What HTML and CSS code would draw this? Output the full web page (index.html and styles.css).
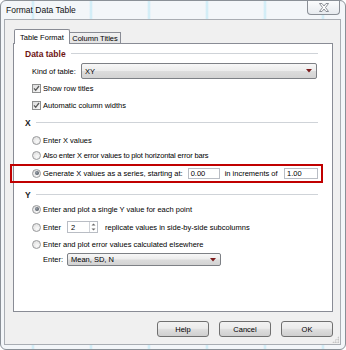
FILE: index.html
```html
<!DOCTYPE html>
<html>
<head>
<meta charset="utf-8">
<link rel="stylesheet" href="styles.css">
</head>
<body>
<div class="window">
  <div class="titlebar">
    <span class="title">Format Data Table</span>
    <div class="close">
      <svg width="10" height="9" viewBox="0 0 10 9"><polygon points="0.5,0.5 3,0.5 5,3 7,0.5 9.5,0.5 6.5,4.5 9.5,8.5 7,8.5 5,6 3,8.5 0.5,8.5 3.5,4.5" fill="#fdfdfd" stroke="#80858c" stroke-width="0.9" stroke-linejoin="round"/></svg>
    </div>
  </div>
  <div class="client">
    <div class="tabs">
      <div class="tab active">Table Format</div>
      <div class="tab">Column Titles</div>
    </div>
    <div class="panel">
      <div class="section s-data"><span class="sec-title maroon">Data table</span><span class="rule"></span></div>
      <div class="row kind">
        <span class="kind-label">Kind of table:</span>
        <div class="select kind-select"><span>XY</span><svg class="arrow" width="6" height="4" viewBox="0 0 6 4"><polygon points="0,0 6,0 3,3.5" fill="#7c1d1d"/></svg></div>
      </div>
      <div class="row opt c1"><span class="cb"><svg width="9" height="9" viewBox="0 0 9 9"><path d="M2 4.4 L3.7 6.3 L7 2" fill="none" stroke="#5a5a5a" stroke-width="1.3"/></svg></span>Show row titles</div>
      <div class="row opt c2"><span class="cb"><svg width="9" height="9" viewBox="0 0 9 9"><path d="M2 4.4 L3.7 6.3 L7 2" fill="none" stroke="#5a5a5a" stroke-width="1.3"/></svg></span>Automatic column widths</div>

      <div class="section s-x"><span class="sec-title">X</span><span class="rule"></span></div>
      <div class="row opt r1"><span class="radio"></span>Enter X values</div>
      <div class="row opt r2 tight"><span class="radio"></span>Also enter X error values to plot horizontal error bars</div>
      <div class="row opt r3"><span class="radio on"></span>Generate X values as a series, starting at:<span class="input start">0.00</span><span class="incr">in increments of</span><span class="input step">1.00</span></div>

      <div class="section s-y"><span class="sec-title">Y</span><span class="rule"></span></div>
      <div class="row opt r4"><span class="radio on"></span>Enter and plot a single Y value for each point</div>
      <div class="row opt r5"><span class="radio"></span><span class="lbl">Enter</span><span class="input spin"><span>2</span><span class="spin-btn"><svg width="7" height="10" viewBox="0 0 7 10"><polygon points="1.5,3.5 5.5,3.5 3.5,1.5" fill="#6a6a6a"/><polygon points="1.5,6.5 5.5,6.5 3.5,8.5" fill="#6a6a6a"/></svg></span></span><span class="repl">replicate values in side-by-side subcolumns</span></div>
      <div class="row opt r6"><span class="radio"></span>Enter and plot error values calculated elsewhere</div>
      <div class="row enter"><span class="lbl">Enter:</span><div class="select enter-select"><span>Mean, SD, N</span><svg class="arrow" width="6" height="4" viewBox="0 0 6 4"><polygon points="0,0 6,0 3,3.5" fill="#7c1d1d"/></svg></div></div>
    </div>
    <div class="buttons">
      <div class="btn">Help</div>
      <div class="btn">Cancel</div>
      <div class="btn">OK</div>
    </div>
    <span class="grip"></span>
  </div>
  <div class="highlight"></div>
</div>
</body>
</html>
```

FILE: styles.css
```css
* { box-sizing: border-box; margin: 0; padding: 0; }
html, body { width: 346px; height: 350px; overflow: hidden; background: #fff; }
body { font-family: "Liberation Sans", Arial, sans-serif; font-size: 7.5px; color: #000; }

.window {
  position: relative;
  width: 346px;
  height: 350px;
  border: 1px solid #8a9097;
  border-radius: 6px;
  overflow: hidden;
  display: flex;
  flex-direction: column;
  background-color: #f3f6f9;
  background-image: linear-gradient(90deg, transparent 0, transparent 28px, rgba(165, 225, 245, 0.55) 30px, transparent 32px);
  background-size: 58px 100%;
  background-position: 2px 0;
}

.titlebar { height: 18px; display: flex; align-items: flex-start; flex: none; }
.title { padding-left: 5px; line-height: 18px; font-size: 8.5px; color: #111; }
.close {
  margin-left: auto;
  margin-right: 5px;
  width: 33px;
  height: 14px;
  border: 1px solid #8a8f96;
  border-top: none;
  border-radius: 0 0 4px 4px;
  background: linear-gradient(#fbfcfd, #e7ebef);
  display: flex;
  align-items: center;
  justify-content: center;
}

.client {
  position: relative;
  flex: 1;
  margin: 0 4px 4px 3px;
  border: 1px solid #a9adb3;
  background: #f0f0f0;
  padding: 9px 7px 7px 8px;
  display: flex;
  flex-direction: column;
}

.tabs { height: 14px; display: flex; align-items: flex-end; position: relative; z-index: 1; flex: none; }
.tab {
  display: flex;
  align-items: center;
  justify-content: center;
  border: 1px solid #898c95;
  border-bottom: none;
}
.tab.active {
  margin-left: 1px;
  width: 56px;
  height: 15px;
  margin-bottom: -1px;
  background: #fff;
  border-radius: 2px 2px 0 0;
}
.tab:not(.active) {
  width: 51px;
  height: 11px;
  border-left: none;
  background: linear-gradient(#f2f2f2, #e3e3e3);
}

.panel {
  flex: none;
  height: 269px;
  border: 1px solid #898c95;
  background: #fff;
  padding: 4px 14px 0 11px;
  display: flex;
  flex-direction: column;
}

.section { height: 12px; display: flex; align-items: center; gap: 5px; flex: none; }
.sec-title { font-weight: bold; font-size: 8.5px; color: #1a1a1a; }
.sec-title.maroon { color: #6e1414; }
.rule { flex: 1; height: 1px; background: #cfd3d8; margin-top: -1px; }

.row { display: flex; align-items: center; flex: none; white-space: nowrap; }
.opt { height: 14px; padding-left: 7px; }
.tight { letter-spacing: -0.16px; }

.kind { height: 16px; margin-top: 3px; padding-left: 7px; }
.kind-label { width: 49px; }
.select {
  height: 100%;
  border: 1px solid #7d8085;
  border-radius: 2px;
  background: linear-gradient(#f7f7f7, #ececec 48%, #dcdcdc 52%, #d3d3d3);
  display: flex;
  align-items: center;
  padding: 0 4px 0 3px;
}
.select .arrow { margin-left: auto; }
.kind-select { flex: 1; margin-right: 1px; }

.c1 { margin-top: 2px; }
.c2 { margin-top: 3px; }
.s-x { margin-top: 5px; }
.r1 { margin-top: 4px; }
.r2 { margin-top: 1px; }
.r3 { margin-top: 4px; }
.s-y { margin-top: 9px; }
.r4 { margin-top: 1px; }
.r5 { margin-top: 4px; }
.r6 { margin-top: 3px; }
.enter { height: 13px; margin-top: 2px; padding-left: 18px; }

.cb {
  width: 9px;
  height: 9px;
  margin-right: 2px;
  border: 1px solid #8e8f8f;
  background: linear-gradient(135deg, #dcdcdc, #f7f7f7);
  display: flex;
  align-items: center;
  justify-content: center;
  flex: none;
}
.cb svg { margin: -1px; }

.radio {
  position: relative;
  width: 9px;
  height: 9px;
  margin-right: 2px;
  border-radius: 50%;
  border: 1px solid #999a9c;
  background: radial-gradient(circle at 60% 65%, #fafafa, #d9d9d9);
  flex: none;
}
.radio.on::after {
  content: "";
  position: absolute;
  left: 1.5px;
  top: 1.5px;
  width: 4px;
  height: 4px;
  border-radius: 50%;
  background: radial-gradient(circle at 40% 40%, #9aa3ad, #3a3f46);
}

.input {
  height: 11px;
  border: 1px solid #b9bdc4;
  background: #fff;
  display: flex;
  align-items: center;
  padding-left: 2px;
  flex: none;
}
.start { width: 32px; margin-left: 5px; }
.incr { margin-left: 5px; }
.step { width: 34px; margin-left: auto; }

.lbl { width: 24px; flex: none; }
.spin { width: 31px; height: 12px; padding-left: 3px; }
.spin-btn { margin-left: auto; height: 100%; width: 8px; border-left: 1px solid #d0d3d8; display: flex; align-items: center; justify-content: center; }
.repl { margin-left: 7px; }
.enter-select { width: 154px; }

.buttons { display: flex; justify-content: flex-end; gap: 10px; margin-top: 9px; flex: none; }
.btn {
  width: 52px;
  height: 16px;
  border: 1px solid #707070;
  border-radius: 3px;
  background: linear-gradient(#f2f2f2, #ebebeb 45%, #dddddd 55%, #cfcfcf);
  display: flex;
  align-items: center;
  justify-content: center;
}

.grip {
  position: absolute;
  right: 1px;
  bottom: 1px;
  width: 7px;
  height: 7px;
  background-image: radial-gradient(circle, #b5b5b5 0.7px, transparent 1px);
  background-size: 2.5px 2.5px;
  clip-path: polygon(100% 0, 100% 100%, 0 100%);
}

.highlight {
  position: absolute;
  left: 9px;
  top: 163px;
  width: 313px;
  height: 19px;
  border: 2px solid #c00000;
  pointer-events: none;
}
```
